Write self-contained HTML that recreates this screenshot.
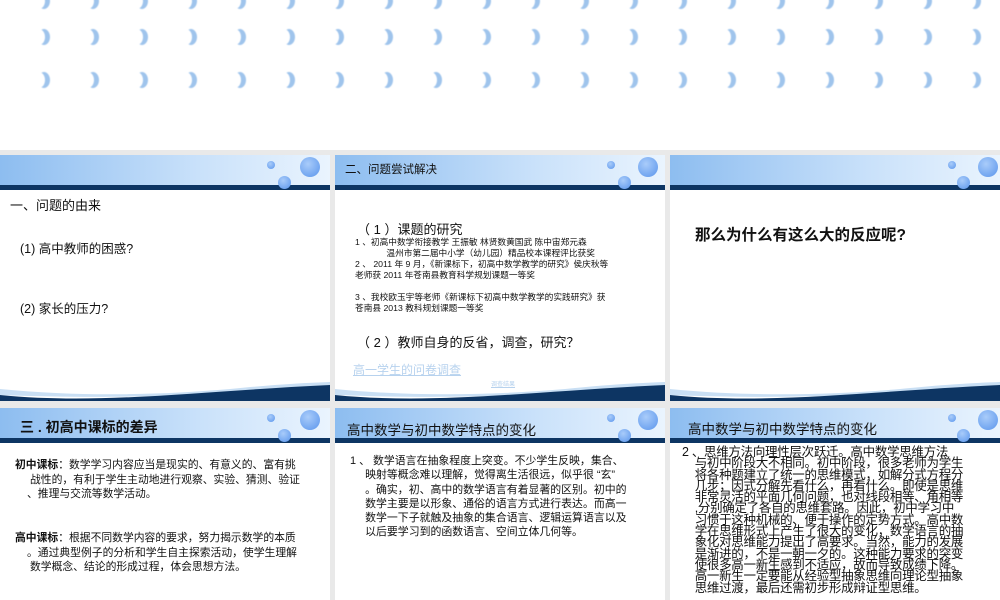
<!DOCTYPE html>
<html style="width:1000px;height:600px;overflow:hidden"><head><meta charset="utf-8"><style>
*{margin:0;padding:0;box-sizing:border-box}
body{width:1000px;height:600px;overflow:hidden;background:#e9e9e9;position:relative;font-family:"Liberation Sans","Noto Sans CJK SC",sans-serif;color:#111}
.top{position:absolute;left:0;top:0;width:1000px;height:150px;background:#fff}
.cr{position:absolute;width:12px;height:16px;border-radius:50%;box-shadow:5px 0 0 0 #9fc4ec;filter:blur(.6px)}
.s{position:absolute;width:330px;height:246px;background:#fff;overflow:hidden}
.r2{height:192px}
.hd{position:absolute;left:0;top:0;width:100%;height:30px;background:linear-gradient(90deg,#8dbdf0,#c9e1fa 60%,#eaf4fe)}
.bar{position:absolute;left:0;top:30px;width:100%;height:5px;background:#0d3563}
.b{position:absolute;border-radius:50%;background:radial-gradient(circle at 40% 35%,#a9ccfa,#5a95ec)}
.t{position:absolute;white-space:nowrap}
svg.w{position:absolute;left:0;bottom:0}
</style></head><body>
<div class="top" id="top"></div>
<script>
var t=document.getElementById('top');
var ys=[-7,29,72];
for(var r=0;r<3;r++)for(var c=0;c<20;c++){var d=document.createElement('div');d.className='cr';d.style.left=(33+c*49)+'px';d.style.top=ys[r]+'px';t.appendChild(d);}
</script>

<!-- slide 1 -->
<div class="s" style="left:0;top:155px">
<div class="hd"></div><div class="bar"></div>
<div class="b" style="left:267px;top:6px;width:8px;height:8px"></div>
<div class="b" style="left:300px;top:2px;width:20px;height:20px"></div>
<div class="b" style="left:278px;top:21px;width:13px;height:13px"></div>
<div class="t" style="left:10px;top:40px;font-size:13px">一、问题的由来</div>
<div class="t" style="left:20px;top:83px;font-size:12.5px">(1) 高中教师的困惑?</div>
<div class="t" style="left:20px;top:143px;font-size:12.5px">(2) 家长的压力?</div>
<svg class="w" width="330" height="40" viewBox="0 0 330 40"><path d="M0,28 C80,36 160,34 230,28 C270,24 300,22 330,21 L330,24 C250,30 160,40 0,34Z" fill="#c9dff4"/><path d="M0,34 C100,44 200,30 330,24 L330,40 L0,40Z" fill="#0d3563"/></svg>
</div>

<!-- slide 2 -->
<div class="s" style="left:335px;top:155px">
<div class="hd"></div><div class="bar"></div>
<div class="b" style="left:272px;top:6px;width:8px;height:8px"></div>
<div class="b" style="left:303px;top:2px;width:20px;height:20px"></div>
<div class="b" style="left:283px;top:21px;width:13px;height:13px"></div>
<div class="t" style="left:10px;top:6px;font-size:11.5px">二、问题尝试解决</div>
<div class="t" style="left:22px;top:64px;font-size:13px">（ 1 ）课题的研究</div>
<div class="t" style="left:20px;top:82px;font-size:8.7px;line-height:11px">1 、初高中数学衔接教学  王振敏  林贤数黄国武  陈中宙郑元森<br>&nbsp;&nbsp;&nbsp;&nbsp;&nbsp;&nbsp;&nbsp;&nbsp;&nbsp;&nbsp;&nbsp;&nbsp;&nbsp;温州市第二届中小学（幼儿园）精品校本课程评比获奖<br>2 、 2011 年 9 月，《新课标下，初高中数学教学的研究》侯庆秋等<br>老师获 2011 年苍南县教育科学规划课题一等奖<br><br>3 、我校欧玉宇等老师《新课标下初高中数学教学的实践研究》获<br>苍南县 2013 教科规划课题一等奖</div>
<div class="t" style="left:22px;top:177px;font-size:13px">（ 2 ）教师自身的反省，调查，研究？</div>
<div class="t" style="left:18px;top:206px;font-size:12px;color:#b7d2ee;text-decoration:underline">高一学生的问卷调查 </div>
<div class="t" style="left:156px;top:224px;font-size:6px;color:#b7d2ee;text-decoration:underline">调查结果</div>
<svg class="w" width="330" height="40" viewBox="0 0 330 40"><path d="M0,28 C80,36 160,34 230,28 C270,24 300,22 330,21 L330,24 C250,30 160,40 0,34Z" fill="#c9dff4"/><path d="M0,34 C100,44 200,30 330,24 L330,40 L0,40Z" fill="#0d3563"/></svg>
</div>

<!-- slide 3 -->
<div class="s" style="left:670px;top:155px">
<div class="hd"></div><div class="bar"></div>
<div class="b" style="left:278px;top:6px;width:8px;height:8px"></div>
<div class="b" style="left:308px;top:2px;width:20px;height:20px"></div>
<div class="b" style="left:287px;top:21px;width:13px;height:13px"></div>
<div class="t" style="left:25px;top:68px;font-size:15.5px;font-weight:bold">那么为什么有这么大的反应呢?</div>
<svg class="w" width="330" height="40" viewBox="0 0 330 40"><path d="M0,28 C80,36 160,34 230,28 C270,24 300,22 330,21 L330,24 C250,30 160,40 0,34Z" fill="#c9dff4"/><path d="M0,34 C100,44 200,30 330,24 L330,40 L0,40Z" fill="#0d3563"/></svg>
</div>

<!-- slide 4 -->
<div class="s r2" style="left:0;top:408px">
<div class="hd"></div><div class="bar"></div>
<div class="b" style="left:267px;top:6px;width:8px;height:8px"></div>
<div class="b" style="left:300px;top:2px;width:20px;height:20px"></div>
<div class="b" style="left:278px;top:21px;width:13px;height:13px"></div>
<div class="t" style="left:20px;top:9px;font-size:14px;font-weight:bold">三 . 初高中课标的差异</div>
<div class="t" style="left:15px;top:50px;font-size:10.8px;line-height:14.5px"><b>初中课标</b>：数学学习内容应当是现实的、有意义的、富有挑<br>&nbsp;&nbsp;&nbsp;&nbsp;&nbsp;战性的，有利于学生主动地进行观察、实验、猜测、验证<br>&nbsp;&nbsp;&nbsp;&nbsp;、推理与交流等数学活动。</div>
<div class="t" style="left:15px;top:123px;font-size:10.8px;line-height:14.5px"><b>高中课标</b>：根据不同数学内容的要求，努力揭示数学的本质<br>&nbsp;&nbsp;&nbsp;&nbsp;。通过典型例子的分析和学生自主探索活动，使学生理解<br>&nbsp;&nbsp;&nbsp;&nbsp;&nbsp;数学概念、结论的形成过程，体会思想方法。</div>
</div>

<!-- slide 5 -->
<div class="s r2" style="left:335px;top:408px">
<div class="hd"></div><div class="bar"></div>
<div class="b" style="left:272px;top:6px;width:8px;height:8px"></div>
<div class="b" style="left:303px;top:2px;width:20px;height:20px"></div>
<div class="b" style="left:283px;top:21px;width:13px;height:13px"></div>
<div class="t" style="left:12px;top:11px;font-size:13.5px">高中数学与初中数学特点的变化</div>
<div class="t" style="left:15px;top:46px;font-size:10.9px;line-height:14.3px">1 、 数学语言在抽象程度上突变。不少学生反映，集合、<br>&nbsp;&nbsp;&nbsp;&nbsp;&nbsp;映射等概念难以理解，觉得离生活很远，似乎很 “玄”<br>&nbsp;&nbsp;&nbsp;&nbsp;&nbsp;。确实，初、高中的数学语言有着显著的区别。初中的<br>&nbsp;&nbsp;&nbsp;&nbsp;&nbsp;数学主要是以形象、通俗的语言方式进行表达。而高一<br>&nbsp;&nbsp;&nbsp;&nbsp;&nbsp;数学一下子就触及抽象的集合语言、逻辑运算语言以及<br>&nbsp;&nbsp;&nbsp;&nbsp;&nbsp;以后要学习到的函数语言、空间立体几何等。</div>
</div>

<!-- slide 6 -->
<div class="s r2" style="left:670px;top:408px">
<div class="hd"></div><div class="bar"></div>
<div class="b" style="left:278px;top:6px;width:8px;height:8px"></div>
<div class="b" style="left:308px;top:2px;width:20px;height:20px"></div>
<div class="b" style="left:287px;top:21px;width:13px;height:13px"></div>
<div class="t" style="left:18px;top:10px;font-size:13.5px">高中数学与初中数学特点的变化</div>
<div class="t" style="left:12px;top:39px;font-size:12.5px;line-height:11.3px;letter-spacing:-0.3px">2 、思维方法向理性层次跃迁。高中数学思维方法<br>&nbsp;&nbsp;&nbsp;&nbsp;与初中阶段大不相同。初中阶段，很多老师为学生<br>&nbsp;&nbsp;&nbsp;&nbsp;将各种题建立了统一的思维模式，如解分式方程分<br>&nbsp;&nbsp;&nbsp;&nbsp;几步；因式分解先看什么，再看什么。即使是思维<br>&nbsp;&nbsp;&nbsp;&nbsp;非常灵活的平面几何问题，也对线段相等、角相等<br>&nbsp;&nbsp;&nbsp;&nbsp;,分别确定了各自的思维套路。因此，初中学习中<br>&nbsp;&nbsp;&nbsp;&nbsp;习惯于这种机械的、便于操作的定势方式。高中数<br>&nbsp;&nbsp;&nbsp;&nbsp;学在思维形式上产生了很大的变化，数学语言的抽<br>&nbsp;&nbsp;&nbsp;&nbsp;象化对思维能力提出了高要求。当然，能力的发展<br>&nbsp;&nbsp;&nbsp;&nbsp;是渐进的，不是一朝一夕的。这种能力要求的突变<br>&nbsp;&nbsp;&nbsp;&nbsp;使很多高一新生感到不适应，故而导致成绩下降。<br>&nbsp;&nbsp;&nbsp;&nbsp;高一新生一定要能从经验型抽象思维向理论型抽象<br>&nbsp;&nbsp;&nbsp;&nbsp;思维过渡，最后还需初步形成辩证型思维。</div>
</div>
</body></html>
